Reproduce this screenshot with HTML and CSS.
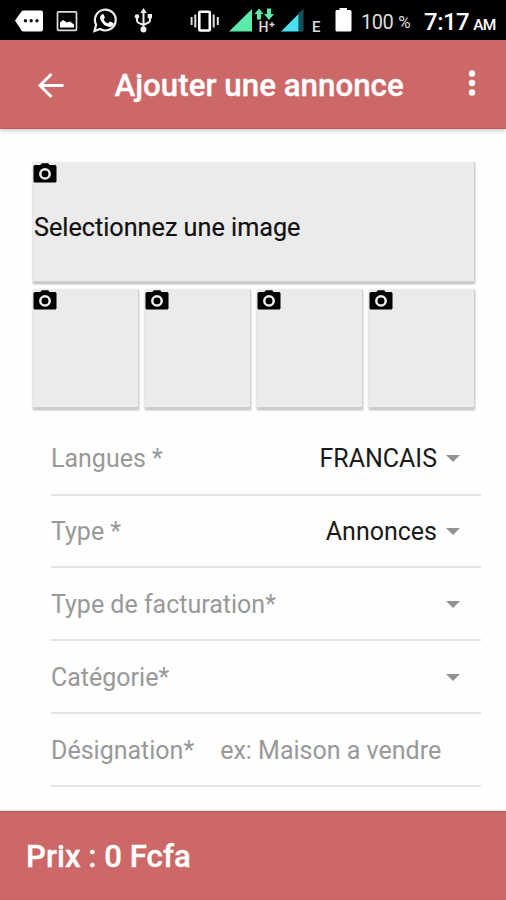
FILE: index.html
```html
<!DOCTYPE html>
<html lang="fr">
<head>
<meta charset="utf-8">
<title>Ajouter une annonce</title>
<link rel="stylesheet" href="styles.css">
</head>
<body>
<svg class="defs" aria-hidden="true">
  <symbol id="camera" viewBox="0 0 24 20">
    <path fill="#000" d="M2 2h5.2L9 .2h6L16.800 2H22q1.500 0 1.500 1.500v14.500q0 1.500-1.500 1.500H2q-1.500 0-1.500-1.500V3.500Q.5 2 2 2z"/>
    <circle cx="12" cy="10.900" r="4.700" fill="none" stroke="#eee" stroke-width="2.500"/>
  </symbol>
</svg>
<header class="status">
  <svg width="50" height="40" viewBox="0 0 50 40"><path fill="#fff" d="M15 20.500l6.500-9q.8-1 2-1H41q2 0 2 2v17q0 2-2 2H23.500q-1.200 0-2-1z"/><g fill="#111"><circle cx="25.500" cy="20.700" r="1.700"/><circle cx="31.200" cy="20.700" r="1.700"/><circle cx="37" cy="20.700" r="1.700"/></g></svg>
  <svg width="35" height="40" viewBox="50 0 35 40"><rect x="57.500" y="11.800" width="19" height="18.500" rx="1" fill="none" stroke="#ddd" stroke-width="1.700"/><path fill="#fff" d="M60 27.500v-5l3-2.500 4 2.500 3-1 4 3v3z"/></svg>
  <svg width="40" height="40" viewBox="85 0 40 40"><path fill="none" stroke="#eee" stroke-width="2.200" d="M94.500 31l1.600-6.200a10.400 10.400 0 1 1 4 4.200z"/><path fill="#fff" d="M101.500 14.500q1.500-1.200 2.300.2l1 2.500q.2.800-1.300 2.200 1.500 3 4.500 4.100l1.500-1.700q.5-.5 1.300-.1l2.400 1.300q.8.500.1 2-1.300 2.300-4 2-6.500-1-9-7.700-.5-3.200 1.200-4.800z"/></svg>
  <svg width="60" height="40" viewBox="125 0 60 40"><g fill="none" stroke="#eee" stroke-width="2"><path d="M143.500 12v16M137 17v3.500q0 1.500 1.500 2.300l5 2.200 5-2.500q1.500-.8 1.500-2.300V17"/></g><g fill="#eee"><path d="M143.500 8l3.300 5h-6.600z"/><circle cx="137" cy="16.500" r="2.300"/><path d="M147.700 14h4.300v4.300h-4.300z"/><circle cx="143.500" cy="29.500" r="3"/></g></svg>
  <svg width="40" height="40" viewBox="185 0 40 40"><rect x="199.300" y="11.800" width="10.500" height="18.700" rx="1" fill="none" stroke="#fff" stroke-width="2.600"/><path fill="none" stroke="#ddd" stroke-width="2" d="M195.300 14.500v13M191.600 17v8M213.700 14.500v13M217.800 17v8"/></svg>
  <svg class="network" width="105" height="40" viewBox="225 0 105 40"><path fill="#5aebaa" d="M229 31.500L252 9v22.500z"/><path fill="#5aebaa" d="M254.500 14l4.500-5.500 4.500 5.500H261v5.500h-4V14zM267 8.500h4V14h3l-5 6-5-6h3z"/><text x="258.500" y="31.700" font-size="14">H</text><path stroke="#ddd" stroke-width="1.400" d="M269.500 24.500h5M272 22v5"/><path fill="#17505c" d="M298.500 13l5-4v22.500h-5z"/><path fill="#48e2f2" d="M281 31.500L298.500 14v17.500z"/><text x="312" y="31.800" font-size="15">E</text></svg>
  <svg width="30" height="40" viewBox="330 0 30 40"><path fill="#fff" d="M336.500 10h3V8h7.500v2h3q1.500 0 1.500 1.500V30q0 1.500-1.500 1.500h-13q-1.500 0-1.500-1.500V11.500q0-1.500 1-1.500z"/></svg>
  <span class="battery">100<span class="percent">%</span></span>
  <span class="clock">7:17<span class="ampm">AM</span></span>
</header>
<nav class="appbar">
  <svg class="back" width="28" height="28" viewBox="0 0 28 28"><path fill="none" stroke="#fff" stroke-width="3" d="M26.500 14.500H3M14.500 3L3 14.500 14.500 26"/></svg>
  <h1 class="title">Ajouter une annonce</h1>
  <svg class="more" width="8" height="28" viewBox="0 0 8 28" fill="#fff"><circle cx="4" cy="4.500" r="3.200"/><circle cx="4" cy="14" r="3.200"/><circle cx="4" cy="23.500" r="3.200"/></svg>
</nav>
<main class="content">
  <section class="photos">
    <div class="card main-photo"><svg class="camera"><use href="#camera"/></svg><span class="hint">Selectionnez une image</span></div>
    <div class="card"><svg class="camera"><use href="#camera"/></svg></div>
    <div class="card"><svg class="camera"><use href="#camera"/></svg></div>
    <div class="card"><svg class="camera"><use href="#camera"/></svg></div>
    <div class="card"><svg class="camera"><use href="#camera"/></svg></div>
  </section>
  <section class="form">
    <div class="row"><span class="label">Langues *</span><span class="value">FRANCAIS</span><i class="caret"></i></div>
    <div class="row"><span class="label">Type *</span><span class="value">Annonces</span><i class="caret"></i></div>
    <div class="row"><span class="label">Type de facturation*</span><i class="caret"></i></div>
    <div class="row"><span class="label">Catégorie*</span><i class="caret"></i></div>
    <div class="row"><span class="label">Désignation*</span><span class="placeholder">ex: Maison a vendre</span></div>
  </section>
</main>
<footer class="price">Prix : 0 Fcfa</footer>
</body>
</html>
```
FILE: styles.css
```css
* { box-sizing: border-box; }
body {
  margin: 0;
  width: 506px;
  height: 900px;
  display: flex;
  flex-direction: column;
  overflow: hidden;
  background: #fefefe;
  font-family: Roboto, sans-serif;
  white-space: nowrap;
}
svg { display: block; flex: none; }
.defs { width: 0; height: 0; position: absolute; }
.status {
  height: 40px;
  flex: none;
  display: flex;
  align-items: center;
  background: #000;
  color: #fff;
}
.network text { fill: #ddd; font-weight: 500; }
.battery { width: 64px; font-size: 20px; color: #ddd; letter-spacing: -0.5px; padding: 3px 0 0 1px; }
.percent { font-size: 17px; margin-left: 5px; vertical-align: 1px; }
.clock { font-size: 24px; font-weight: 500; padding-top: 3px; letter-spacing: -0.5px; }
.ampm { font-size: 15.5px; margin-left: 4px; letter-spacing: -0.8px; }
.appbar {
  height: 89px;
  flex: none;
  display: flex;
  align-items: center;
  padding: 1px 30px 0 37px;
  background: #cc6867;
  border-bottom: 1px solid #b95c5c;
  box-shadow: 0 1px 5px rgba(0, 0, 0, .28);
  color: #fff;
}
.title { margin: 2px 0 0 49.5px; font-size: 31.3px; font-weight: 500; line-height: 36px; -webkit-text-stroke: 0.3px #fff; }
.more { margin-left: auto; margin-top: -3px; }
.content { flex: 1; min-height: 0; padding-top: 33px; }
.photos {
  margin: 0 31px 0 33px;
  display: grid;
  grid-template-columns: repeat(4, 1fr);
  grid-template-rows: 121px 120px;
  gap: 6px;
}
.card {
  background: #ebebeb;
  box-shadow: 0 1px 2px rgba(0, 0, 0, .3);
  border-bottom: 2px solid #cdcdcd;
  border-right: 1px solid #d2d2d2;
}
.main-photo { grid-column: 1 / -1; }
.camera { width: 24px; height: 20px; margin-top: 1px; }
.hint { display: block; margin: 30px 0 0 1px; font-size: 25.2px; line-height: 30px; color: #111; -webkit-text-stroke: 0.2px #111; }
.form { margin: 13px 25px 0 51px; }
.row {
  height: 72.75px;
  display: flex;
  align-items: center;
  border-bottom: 2px solid #e4e4e4;
  font-size: 25px;
  padding: 2px 21px 0 0;
}
.row:first-child { height: 73.5px; }
.label, .placeholder { color: #999; }
.placeholder { margin-left: 26px; }
.value { margin-left: auto; color: #1a1a1a; }
.caret {
  margin-left: auto;
  border: 7.5px solid transparent;
  border-top-color: #929292;
  border-bottom-width: 0;
}
.value + .caret { margin-left: 9px; }
.price {
  height: 89px;
  flex: none;
  padding: 0 0 0 26px;
  display: flex;
  align-items: center;
  background: #cc6867;
  border-top: 2px solid #c05f60;
  box-shadow: 0 -1px 1px #ddd;
  color: #fff;
  font-size: 31.2px;
  font-weight: 500;
  -webkit-text-stroke: 0.3px #fff;
}
```
